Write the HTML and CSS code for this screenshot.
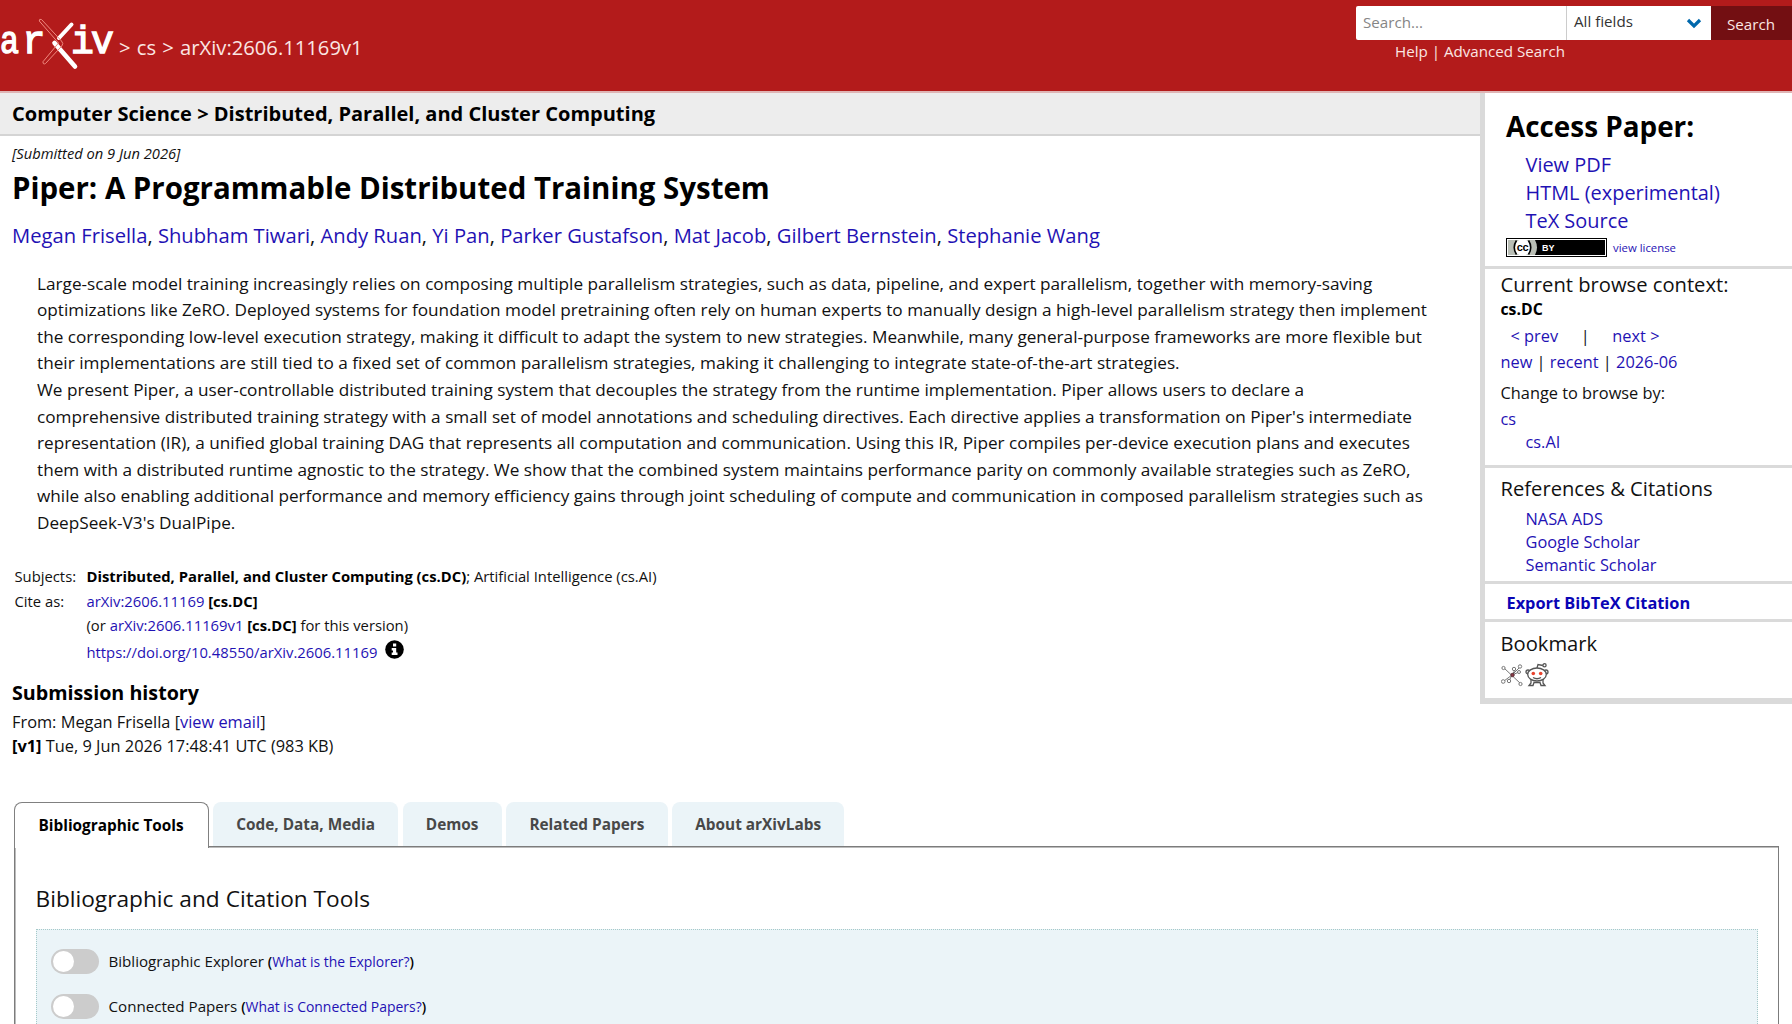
FILE: index.html
```html
<!DOCTYPE html>
<html lang="en">
<head>
<meta charset="utf-8">
<title>[2606.11169v1] Piper: A Programmable Distributed Training System</title>
<link rel="stylesheet" href="styles.css">
</head>
<body>
<header class="header">
  <div class="breadcrumbs">
    <svg class="logo" width="119" height="60" viewBox="0 0 119 60" aria-label="arXiv">
      <g class="logo-text">
        <text x="0" y="42" textLength="19" lengthAdjust="spacingAndGlyphs">a</text><text x="22.500" y="42">r</text>
        <text x="71" y="42">i</text><text x="91" y="42">v</text>
      </g>
      <path d="M71.500 13.500L59 27" stroke="#fff" stroke-width="4" stroke-linecap="round"/>
      <path d="M54.500 32L75 55.500" stroke="#fff" stroke-width="4.600" stroke-linecap="round"/>
      <path class="logo-thin" d="M41.500 8.500l20 21.500q2.500 2.500.300 5L45.500 52.500q-2.600 1.500-2.500-1.800L58.500 32 39.300 10q-.300-2.500 2.200-1.500z"/>
    </svg>
    <span class="crumb">&gt; <a>cs</a> &gt; arXiv:2606.11169v1</span>
  </div>
  <div class="search">
    <div class="search-row">
      <div class="search-input">Search...</div>
      <div class="search-select"><span>All fields</span>
        <svg width="16" height="12" viewBox="0 0 16 12"><path d="M2 3l6 6 6-6" fill="none" stroke="#0068ac" stroke-width="3.200"/></svg>
      </div>
      <div class="search-button">Search</div>
    </div>
    <div class="search-help"><a>Help</a> | <a>Advanced Search</a></div>
  </div>
</header>

<div class="content">
  <main class="main">
    <h1 class="subject">Computer Science &gt; Distributed, Parallel, and Cluster Computing</h1>
    <div class="paper">
      <div class="dateline">[Submitted on 9 Jun 2026]</div>
      <h2 class="title">Piper: A Programmable Distributed Training System</h2>
      <div class="authors"><a>Megan Frisella</a>, <a>Shubham Tiwari</a>, <a>Andy Ruan</a>, <a>Yi Pan</a>, <a>Parker Gustafson</a>, <a>Mat Jacob</a>, <a>Gilbert Bernstein</a>, <a>Stephanie Wang</a></div>
      <blockquote class="abstract">Large-scale model training increasingly relies on composing multiple parallelism strategies, such as data, pipeline, and expert parallelism, together with memory-saving<br>
optimizations like ZeRO. Deployed systems for foundation model pretraining often rely on human experts to manually design a high-level parallelism strategy then implement<br>
the corresponding low-level execution strategy, making it difficult to adapt the system to new strategies. Meanwhile, many general-purpose frameworks are more flexible but<br>
their implementations are still tied to a fixed set of common parallelism strategies, making it challenging to integrate state-of-the-art strategies.<br>
We present Piper, a user-controllable distributed training system that decouples the strategy from the runtime implementation. Piper allows users to declare a<br>
comprehensive distributed training strategy with a small set of model annotations and scheduling directives. Each directive applies a transformation on Piper's intermediate<br>
representation (IR), a unified global training DAG that represents all computation and communication. Using this IR, Piper compiles per-device execution plans and executes<br>
them with a distributed runtime agnostic to the strategy. We show that the combined system maintains performance parity on commonly available strategies such as ZeRO,<br>
while also enabling additional performance and memory efficiency gains through joint scheduling of compute and communication in composed parallelism strategies such as<br>
DeepSeek-V3's DualPipe.</blockquote>
      <div class="meta">
        <span>Subjects:</span><span><b>Distributed, Parallel, and Cluster Computing (cs.DC)</b>; Artificial Intelligence (cs.AI)</span>
        <span>Cite as:</span><span><a>arXiv:2606.11169</a> <b>[cs.DC]</b></span>
        <span></span><span>(or <a>arXiv:2606.11169v1</a> <b>[cs.DC]</b> for this version)</span>
        <span></span><span class="doi"><a>https://doi.org/10.48550/arXiv.2606.11169</a>
          <svg width="19" height="19" viewBox="0 0 19 19"><circle cx="9.500" cy="9.500" r="9.300"/><path d="M8 3.500h3.200v3H8zM6.700 8h4.500v4.600h1.300v2.400H6.700v-2.400H8v-2.200H6.700z" fill="#fff"/></svg>
        </span>
      </div>
      <h2 class="history-title">Submission history</h2>
      <div class="history">From: Megan Frisella [<a>view email</a>]<br><b>[v1]</b> Tue, 9 Jun 2026 17:48:41 UTC (983 KB)</div>
    </div>
  </main>

  <aside class="sidebar">
    <section class="access">
      <h2>Access Paper:</h2>
      <ul><li><a>View PDF</a></li><li><a>HTML (experimental)</a></li><li><a>TeX Source</a></li></ul>
      <div class="license">
        <svg width="101" height="19" viewBox="0 0 101 19">
          <path d="M0 0h101v19H0z"/><path d="M1 1h99v17H1z" fill="#fff"/><path d="M2 2h97v15H2z"/><path d="M2 2h27q4 7.500 0 15H2z" fill="#b9beb5"/>
          <circle cx="16.500" cy="9.500" r="8.300" fill="#fff" /><path d="M10.500 2.500q-4.500 7 0 14M22.500 2.500q4.500 7 0 14" fill="none" stroke="#000" stroke-width="1.600"/>
          <text class="cc" x="10.800" y="13">cc</text><text class="by" x="36" y="13">BY</text>
        </svg>
        <a>view license</a>
      </div>
    </section>
    <section class="browse">
      <div class="side-title">Current browse context:</div>
      <div class="current">cs.DC</div>
      <div class="prevnext"><a>&lt; prev</a><span>|</span><a>next &gt;</a></div>
      <div class="list"><a>new</a> | <a>recent</a> | <a>2026-06</a></div>
      <div class="change">Change to browse by:</div>
      <div class="switch"><a>cs</a></div>
      <div class="switch-sub"><a>cs.AI</a></div>
    </section>
    <section class="references">
      <div class="side-title">References &amp; Citations</div>
      <ul><li><a>NASA ADS</a></li><li><a>Google Scholar</a></li><li><a>Semantic Scholar</a></li></ul>
    </section>
    <section class="export"><a>Export BibTeX Citation</a></section>
    <section class="bookmark">
      <div class="side-title">Bookmark</div>
      <div class="bookmark-icons">
        <svg width="22" height="24" viewBox="0 0 22 24" fill="none" stroke="#777" stroke-width="1">
          <path d="M3 5l17 16M3 18l8-6 8-8M14 7l-3 5M11 12l7-3M11 12l-3 6"/><g fill="#fff"><circle cx="2.500" cy="5" r="1.600"/><circle cx="2.200" cy="18.500" r="1.800"/><circle cx="8" cy="18" r="1.700"/><circle cx="13" cy="6" r="1.700"/><circle cx="19" cy="3.500" r="1.700"/><circle cx="18" cy="9" r="1.500"/><circle cx="19.500" cy="21" r="1.600"/></g><circle cx="11.500" cy="12" r="1.700" fill="#8b3a45" stroke="#5a3038"/>
        </svg>
        <svg width="24" height="24" viewBox="0 0 24 24" fill="#fff" stroke="#555" stroke-width="1.300">
          <path d="M6 16v4l-2 2.500h4l1-3h6l1 3h4L18 20v-4"/><circle cx="3" cy="9" r="2"/><circle cx="21" cy="9" r="2"/><ellipse cx="12" cy="11.500" rx="9.300" ry="6.500"/><path d="M12 5l1-3.500 5 1" fill="none"/><circle cx="19.500" cy="2.300" r="1.600"/><path d="M8 14.500q4 2.500 8 0" fill="none"/><g fill="#e8432e" stroke="none"><circle cx="8.300" cy="10.500" r="1.800"/><circle cx="15.700" cy="10.500" r="1.800"/></g>
        </svg>
      </div>
    </section>
  </aside>
</div>

<div class="labs">
  <div class="tabs">
    <div class="tab tab-active">Bibliographic Tools</div>
    <div class="tab">Code, Data, Media</div>
    <div class="tab">Demos</div>
    <div class="tab">Related Papers</div>
    <div class="tab">About arXivLabs</div>
  </div>
  <div class="panel">
    <h3>Bibliographic and Citation Tools</h3>
    <div class="tools">
      <div class="tool"><span class="toggle"></span><span>Bibliographic Explorer <em>(<a>What is the Explorer?</a>)</em></span></div>
      <div class="tool"><span class="toggle"></span><span>Connected Papers <em>(<a>What is Connected Papers?</a>)</em></span></div>
    </div>
  </div>
</div>
</body>
</html>
```
FILE: styles.css
```css
* { box-sizing: border-box; }
body { margin: 0; height: 1024px; overflow: hidden; background: #fff; color: #111; font-family: "Open Sans", "Noto Sans", sans-serif; }
h1, h2, h3, ul, blockquote { margin: 0; padding: 0; }
ul { list-style: none; }
a { color: #1f12b4; }
b { color: #000; }
svg { display: block; flex: none; }

.header { display: flex; justify-content: space-between; height: 93px; background: #b31b1b; border-bottom: 2px solid #dfb5b5; color: #fbe6e3; }
.header a { color: inherit; }
.breadcrumbs { display: flex; padding-top: 11px; }
.logo-text { font: 38px "Liberation Mono", monospace; fill: #fff; stroke: #fff; stroke-width: 1.4px; }
.logo-thin { fill: none; stroke: #f08a80; stroke-width: 1; }
.crumb { font-size: 20.2px; line-height: 28px; padding-top: 21.5px; white-space: pre; word-spacing: 1px; }
.search { width: 436px; padding-top: 6px; }
.search-row { display: flex; height: 34px; font-size: 15.15px; }
.search-input { width: 210px; height: 34px; padding-left: 7px; background: #fff; color: #858585; line-height: 33px; border-radius: 2px 0 0 2px; }
.search-select { display: flex; justify-content: space-between; width: 145px; height: 34px; padding: 0 9px 0 7px; background: #fff; border-left: 1px solid #ccc; color: #333; line-height: 31px; }
.search-select svg { margin-top: 11px; }
.search-button { width: 81px; height: 34px; padding-left: 16px; background: #730f12; line-height: 36px; }
.search-help { padding: 0 0 0 39px; font-size: 15.15px; line-height: 23px; }

.content { display: flex; height: 709px; }
.main { width: 1480px; }
.subject { height: 43px; padding-left: 12px; background: #ededed; border-bottom: 2px solid #d4d4d4; color: #000; font-size: 20.03px; line-height: 41px; }
.paper { padding: 7px 0 0 12px; }
.dateline { font-size: 14.71px; font-style: italic; line-height: 20px; }
.title { margin-top: 7px; color: #000; font-size: 29.45px; line-height: 36px; }
.authors { margin-top: 16px; font-size: 20.19px; line-height: 26px; }
.abstract { margin: 22.8px 0 0 25px; font-size: 17.19px; line-height: 26.54px; white-space: nowrap; }
.meta { display: grid; grid-template-columns: 72px 1fr; grid-template-rows: 25px 24px 25px 26px; margin: 28.2px 0 0 2.5px; font-size: 14.8px; line-height: 24px; }
.doi { display: flex; gap: 8px; padding-top: 2px; }
.history-title { margin-top: 15.5px; color: #000; font-size: 19.69px; line-height: 26px; }
.history { margin-top: 4.5px; font-size: 16.36px; line-height: 24px; }

.sidebar { width: 312px; height: 611px; border-left: 5px solid #dadada; border-bottom: 6px solid #dadada; font-size: 16.35px; }
.sidebar section { padding-left: 15.5px; border-bottom: 3px solid #dadada; overflow: hidden; }
.sidebar section.bookmark { border-bottom: 0; }
.sidebar .access { height: 176px; padding: 11px 0 0 21px; }
.access h2 { color: #000; font-size: 27.85px; line-height: 44px; }
.access ul { padding-top: 3px; }
.access li { padding-left: 19.5px; font-size: 19.95px; line-height: 27.8px; }
.license { display: flex; gap: 6px; margin-top: 3.6px; font-size: 11.36px; line-height: 20px; }
.cc { font: bold 11px "Liberation Sans", sans-serif; letter-spacing: -.5px; }
.by { font: bold 9px "Liberation Sans", sans-serif; fill: #fff; }
.browse { height: 199px; }
.side-title { font-size: 20.18px; line-height: 28px; padding-top: 1px; }
.current { color: #000; font-size: 15.8px; font-weight: bold; line-height: 20px; padding-top: .5px; }
.prevnext { display: flex; justify-content: space-between; width: 159px; padding-left: 10px; margin-top: 4.5px; line-height: 26px; }
.list { line-height: 27px; }
.change { margin-top: 3.5px; line-height: 27px; }
.switch { line-height: 25px; }
.switch-sub { padding-left: 25px; line-height: 21px; }
.references { height: 116px; }
.references .side-title { padding-top: 6px; }
.references ul { padding-top: 6px; }
.references li { padding-left: 25px; line-height: 22.8px; }
.sidebar .export { height: 38px; padding-left: 21.5px; font-weight: bold; line-height: 38px; }
.export a { color: #0a05b5; }
.bookmark .side-title { padding-top: 6.5px; }
.bookmark-icons { display: flex; gap: 2px; padding-top: 6.5px; }

.labs { padding: 0 13px 0 14px; }
.tabs { display: flex; gap: 4.3px; height: 44px; font-size: 15.36px; font-weight: bold; }
.tab { height: 44px; padding: 0 23.3px; background: #ebf4f8; border-radius: 8px 8px 0 0; color: #484848; line-height: 45px; white-space: nowrap; }
.tab-active { position: relative; height: 46px; padding: 0 24px 0 23.5px; background: #fff; border: 1.5px solid #808080; border-bottom: 0; color: #000; line-height: 46px; }
.panel { height: 178px; padding: 37px 20px 0 20.5px; border: 1px solid #7c7c7c; border-bottom: 0; box-shadow: inset 1px 1px 0 #bcbcbc; }
.panel h3 { font-size: 22.7px; font-weight: normal; line-height: 30px; }
.tools { height: 95px; margin-top: 15px; padding: 19px 14px 0; background: #ebf4f8; border: 1px dotted #a5c9c9; border-bottom: 0; }
.tool { display: flex; gap: 10px; height: 25px; margin-bottom: 20px; font-size: 15.15px; line-height: 25px; }
.tool:last-child { margin-bottom: 0; }
.toggle { width: 48px; height: 25px; padding: 2px; border-radius: 13px; background: #ccc; }
.toggle::before { content: ""; display: block; width: 21px; height: 21px; border-radius: 50%; background: #fff; }
.tool em { color: #000; font-size: 13.95px; font-style: normal; font-weight: 600; }
.tool em a { font-weight: 400; }
```
